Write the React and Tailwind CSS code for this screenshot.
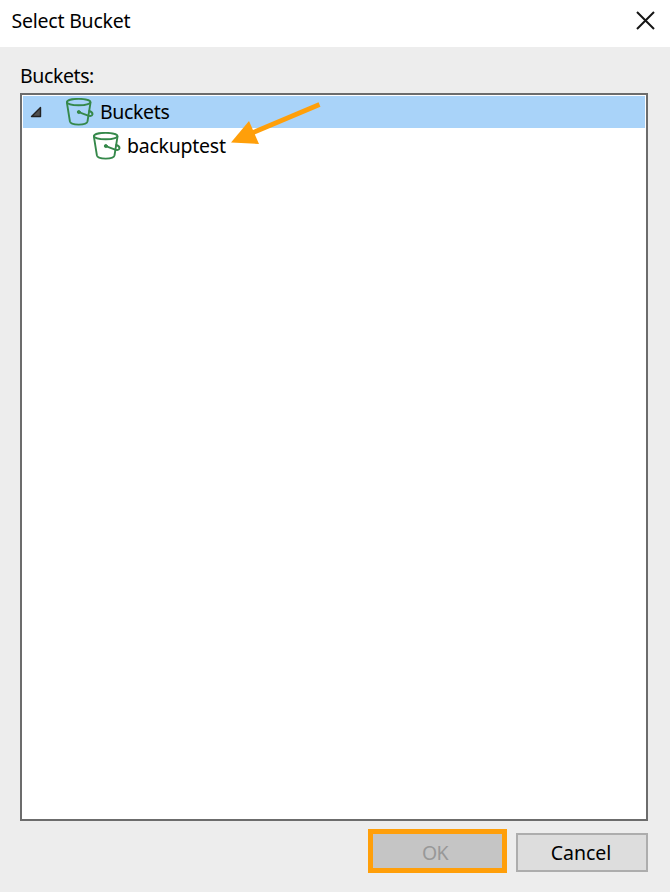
function BucketIcon() {
  return (
    <svg className="h-7 w-7 shrink-0" viewBox="0 0 28 28" fill="none" stroke="#35884a" strokeWidth="1.9" strokeLinecap="round" strokeLinejoin="round">
      <ellipse cx="12.7" cy="4.1" rx="11.8" ry="3.2" />
      <path d="M0.9 4.6 L3.9 23.4 C4.7 27.7 20.7 27.7 21.5 23.4 L24.5 4.6" />
      <path d="M12.8 14.1 L21.5 17.4 C24.2 18.5 26.1 18.1 26.5 16.2 C26.6 14.7 25.2 13.6 23.3 13" />
      <circle cx="12.8" cy="14" r="1.5" fill="#35884a" strokeWidth="1" />
    </svg>
  );
}

function TitleBar() {
  return (
    <header className="flex h-[47px] shrink-0 items-start justify-between bg-white pl-[11.5px] pr-[15px]">
      <h1 className="mt-[7px] text-[19.5px] leading-7 tracking-[-0.22px]">Select Bucket</h1>
      <button aria-label="Close" className="mt-[11px] h-[19px] w-[19px]">
        <svg className="h-[19px] w-[19px]" viewBox="0 0 19 19" stroke="#151515" strokeWidth="2">
          <path d="M1 1 L18 18 M18 1 L1 18" />
        </svg>
      </button>
    </header>
  );
}

function BucketTree() {
  return (
    <div className="relative h-[728px] w-[628px] border-2 border-[#6c6c6c] bg-white p-px">
      <div className="flex h-8 items-center bg-[#a9d3f9] pl-[7px]">
        <svg className="h-3 w-3" viewBox="0 0 12 12">
          <path d="M10.5 1.5 V10.5 H1.5 Z" fill="#505050" stroke="#222" strokeWidth="1.4" strokeLinejoin="round" />
        </svg>
        <div className="ml-[24px] flex items-center gap-1.5">
          <BucketIcon />
          <span className="text-[19.5px] leading-7 tracking-[-0.35px]">Buckets</span>
        </div>
      </div>
      <div className="flex h-[34px] items-center gap-1.5 pl-[70px] pt-px">
        <BucketIcon />
        <span className="text-[19.5px] leading-7 tracking-[-0.25px]">backuptest</span>
      </div>
      <svg className="absolute left-[208px] top-[5px] h-[48px] w-[94px]" viewBox="230 100 94 48">
        <path d="M319.5 104.5 L251 133.5" stroke="#ff9f0a" strokeWidth="4.8" />
        <path d="M231 142.5 L249 121 L259 144 Z" fill="#ff9f0a" />
      </svg>
    </div>
  );
}

export default function App() {
  return (
    <div className="flex h-[892px] w-[670px] flex-col overflow-hidden bg-[#ededed] font-['Noto_Sans','Segoe_UI',sans-serif] text-black">
      <TitleBar />
      <main className="flex flex-col pl-5 pt-[15px]">
        <p className="mb-[3px] h-7 text-[19.5px] leading-7 tracking-[-0.4px]">Buckets:</p>
        <BucketTree />
        <div className="mr-[22px] mt-2 flex items-end justify-end gap-[9px]">
          <button disabled className="flex h-11 w-[139px] items-center justify-center border-[5px] border-[#ff9f0a] bg-[#c5c5c5] pr-[5px] pt-1 text-[19.5px] leading-7 tracking-[-0.6px] text-[#989898]">
            OK
          </button>
          <button className="mb-px flex h-[39px] w-[132px] items-center justify-center border-2 border-[#adadad] bg-[#dddddd] pr-0.5 pt-px text-[19.5px] leading-7">
            Cancel
          </button>
        </div>
      </main>
    </div>
  );
}
